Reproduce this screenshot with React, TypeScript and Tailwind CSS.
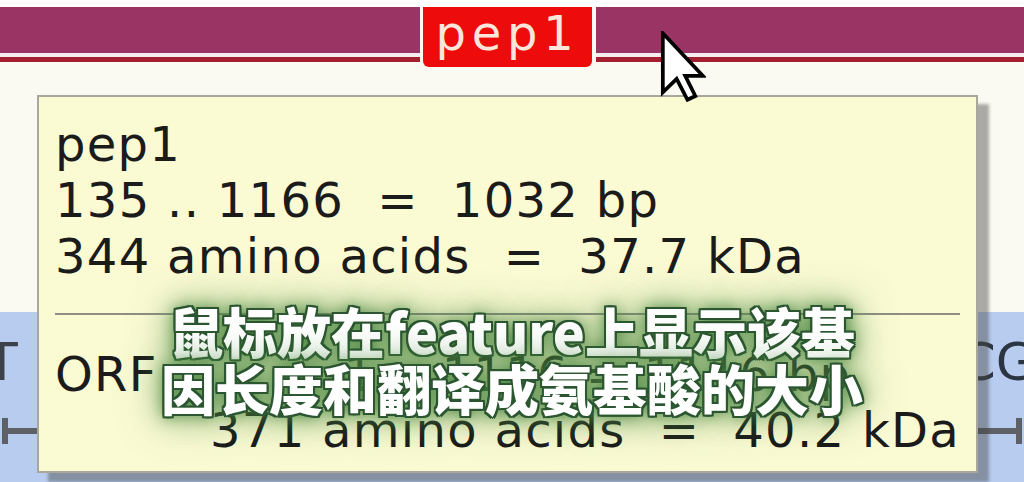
import React from "react";

const outline =
  "[text-shadow:2px_0_0_#2b5631,-2px_0_0_#2b5631,0_2px_0_#2b5631,0_-2px_0_#2b5631,2px_2px_0_#2b5631,-2px_2px_0_#2b5631,2px_-2px_0_#2b5631,-2px_-2px_0_#2b5631,0_0_14px_rgba(70,130,60,0.95),0_0_28px_rgba(80,140,70,0.85),0_0_44px_rgba(90,150,80,0.7)]";

function Cursor() {
  return (
    <svg
      className="absolute left-[660px] top-[31px]"
      width="46"
      height="71"
      viewBox="0 0 12 19"
    >
      <path
        d="M0.6 0.6 L0.6 16.4 L4.3 12.8 L7.2 18.4 L9.3 17.4 L6.6 12 L11.3 12 Z"
        fill="#ffffff"
        stroke="#000000"
        strokeWidth="1"
        strokeLinejoin="miter"
      />
    </svg>
  );
}

export default function App() {
  return (
    <div className="relative w-[1024px] h-[482px] overflow-hidden bg-[#fbfaf2] font-['DejaVu_Sans',sans-serif]">
      {/* top white strip */}
      <div className="h-[7px] bg-white" />

      {/* feature bar */}
      <div className="flex h-[60px]">
        <div className="w-[420px] flex flex-col">
          <div className="h-[46px] bg-[#9a3465]" />
          <div className="h-[4px] bg-[#f6eeee]" />
          <div className="h-[5px] bg-[#a42030]" />
        </div>
        <div className="w-[3px]" />
        <div className="w-[169px] h-[60px] bg-[#ee0b0b] rounded-b-[6px] flex items-start justify-center pt-[1px]">
          <span className="text-[48px] leading-[50px] tracking-[0.12em] text-[#fbe6dc]">pep1</span>
        </div>
        <div className="w-[4px]" />
        <div className="flex-1 flex flex-col">
          <div className="h-[46px] bg-[#9a3465]" />
          <div className="h-[4px] bg-[#f6eeee]" />
          <div className="h-[5px] bg-[#a42030]" />
        </div>
      </div>

      {/* sequence area */}
      <div className="h-[245px]" />
      <div className="h-[170px] bg-[#b8ccef] flex justify-between">
        <div className="flex flex-col w-[40px]">
          <span className="mt-[22px] -ml-[14px] text-[52px] leading-[56px] text-[#3b424c]">T</span>
          <div className="mt-[28px] flex items-center">
            <div className="w-[6px] h-[26px] bg-[#5e6068] ml-[2px]" />
            <div className="flex-1 h-[6px] bg-[#5e6068]" />
          </div>
        </div>
        <div className="flex flex-col w-[52px] items-end">
          <span className="mt-[22px] -mr-[12px] text-[52px] leading-[56px] text-[#2c3542]">CG</span>
          <div className="mt-[28px] flex items-center w-full">
            <div className="flex-1 h-[6px] bg-[#5e6068]" />
            <div className="w-[6px] h-[26px] bg-[#5e6068] mr-[2px]" />
          </div>
        </div>
      </div>

      {/* tooltip */}
      <div className="absolute left-[37px] top-[95px] w-[941px] h-[378px] border-2 border-[#a7a79b] bg-[#fafad3] shadow-[11px_9px_3px_rgba(70,70,70,0.45)] text-[48px] leading-[56px] tracking-[1.3px] text-[#1b1b1b]">
        <div className="pt-[19px] pl-[16px] whitespace-pre">
          <div>pep1</div>
          <div>135 .. 1166  =  1032 bp</div>
          <div>344 amino acids  =  37.7 kDa</div>
        </div>
        <div className="mt-[29px] ml-[16px] mr-[16px] h-[2px] bg-[#8e8e84]" />
        <div className="mt-[31px] pl-[16px] whitespace-pre flex">
          <span>ORF</span>
          <span className="ml-[186px]">1 .. 1116 = 1116 bp</span>
        </div>
        <div className="pr-[16px] whitespace-pre text-right">371 amino acids  =  40.2 kDa</div>
      </div>

      {/* subtitle */}
      <div
        className={`absolute left-0 right-0 top-[302px] flex flex-col items-center text-white font-['Noto_Sans_CJK_SC',sans-serif] font-black text-[54px] leading-[57px] ${outline}`}
      >
        <div>鼠标放在feature上显示该基</div>
        <div>因长度和翻译成氨基酸的大小</div>
      </div>

      <Cursor />
    </div>
  );
}
